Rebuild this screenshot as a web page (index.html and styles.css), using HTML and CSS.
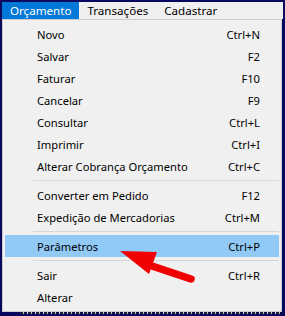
FILE: index.html
```html
<!DOCTYPE html>
<html>
<head>
<meta charset="utf-8">
<link rel="stylesheet" href="styles.css">
</head>
<body>
<div class="frame">
  <div class="menubar">
    <div class="mb-item active">Orçamento</div>
    <div class="mb-item">Transações</div>
    <div class="mb-item">Cadastrar</div>
  </div>
  <div class="dropdown">
    <div class="item"><span>Novo</span><span>Ctrl+N</span></div>
    <div class="item"><span>Salvar</span><span>F2</span></div>
    <div class="item"><span>Faturar</span><span>F10</span></div>
    <div class="item"><span>Cancelar</span><span>F9</span></div>
    <div class="item"><span>Consultar</span><span>Ctrl+L</span></div>
    <div class="item"><span>Imprimir</span><span>Ctrl+I</span></div>
    <div class="item"><span>Alterar Cobrança Orçamento</span><span>Ctrl+C</span></div>
    <div class="sep"></div>
    <div class="item"><span>Converter em Pedido</span><span>F12</span></div>
    <div class="item"><span>Expedição de Mercadorias</span><span>Ctrl+M</span></div>
    <div class="sep"></div>
    <div class="item hover"><span>Parâmetros</span><span>Ctrl+P</span></div>
    <div class="sep"></div>
    <div class="item"><span>Sair</span><span>Ctrl+R</span></div>
    <div class="item"><span>Alterar</span><span></span></div>
  </div>
  <div class="behind"></div>
</div>
<svg class="arrow" width="285" height="316" viewBox="0 0 285 316">
  <line x1="143" y1="263" x2="191" y2="279" stroke="#f00000" stroke-width="7.5" stroke-linecap="round"/>
  <polygon points="120,251 157,252 149,274" fill="#f00000"/>
</svg>
</body>
</html>
```
FILE: styles.css
```css
html, body {
  margin: 0;
  padding: 0;
}
body {
  width: 285px;
  height: 316px;
  overflow: hidden;
  background: #08085e;
  font-family: "Noto Sans", "Liberation Sans", sans-serif;
  font-size: 11.2px;
  color: #000;
  position: relative;
}
.frame {
  padding: 2px 2px 0 2px;
}
.menubar {
  display: flex;
  height: 17px;
  background: #f0f0f0;
  line-height: 17px;
  font-size: 11.6px;
}
.mb-item {
  padding: 0 8px;
}
.mb-item.active {
  background: #0078d7;
  color: #fff;
}
.dropdown {
  box-sizing: border-box;
  width: 280px;
  border: 1px solid #cccccc;
  background: #f0f0f0;
  padding: 3px 2px;
}
.item {
  display: flex;
  justify-content: space-between;
  height: 22px;
  line-height: 22px;
  padding: 1px 19px 0 32px;
  box-sizing: border-box;
}
.item.hover {
  background: #91c9f7;
}
.sep {
  height: 7px;
  display: flex;
  align-items: center;
  padding-left: 28px;
}
.sep::before {
  content: "";
  flex: 1;
  height: 1px;
  background: #d7d7d7;
}
.behind {
  height: 2px;
  margin-left: 18px;
  background: repeating-linear-gradient(90deg, #1a1a50 0 3px, #d8cc90 3px 4px, #0c0c40 4px 7px, #e8e8e8 7px 8px);
}
.arrow {
  position: absolute;
  left: 0;
  top: 0;
}
```
